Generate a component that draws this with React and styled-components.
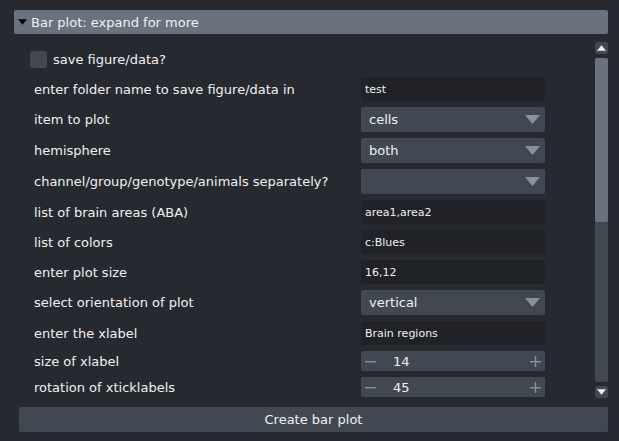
import { styled, createGlobalStyle } from "styled-components"

const GlobalStyle = createGlobalStyle`
    html, body {
        margin: 0;
        padding: 0;
        background: #262930;
    }
    body {
        font-family: "DejaVu Sans", "Liberation Sans", sans-serif;
        color: #f0f1f2;
    }
`

const Page = styled.div`
    width: 619px;
    height: 441px;
    box-sizing: border-box;
    padding: 10px 11px 0 14px;
    display: flex;
    flex-direction: column;
`

const Header = styled.div`
    height: 24px;
    background: #6a737d;
    border-radius: 2px;
    display: flex;
    align-items: center;
    padding-left: 4px;
    font-size: 13px;
    gap: 4px;
`

const Body = styled.div`
    display: flex;
    height: 373px;
`

const Content = styled.div`
    flex: 1;
    display: flex;
    flex-direction: column;
    gap: 6px;
    padding: 13px 0 0 20px;
    overflow: hidden;
`

const Row = styled.div`
    display: grid;
    grid-template-columns: 327px 184px;
    align-items: center;
    min-height: ${p => p.$h || 24}px;
`

const Label = styled.span`
    font-size: 13px;
    white-space: nowrap;
`

const CheckRow = styled.label`
    display: flex;
    align-items: center;
    gap: 6px;
    height: 24px;
    margin-left: -4px;
    font-size: 13px;
`

const Box = styled.span`
    width: 17px;
    height: 17px;
    border-radius: 3px;
    background: #414851;
`

const TextInput = styled.div`
    height: 24px;
    box-sizing: border-box;
    background: #202227;
    border-radius: 2px;
    display: flex;
    align-items: center;
    padding-left: 4px;
    font-size: 11px;
`

const Combo = styled.div`
    height: 25px;
    box-sizing: border-box;
    background: #414851;
    border-radius: 2px;
    display: flex;
    align-items: center;
    justify-content: space-between;
    padding: 0 5px 0 8px;
    font-size: 13px;
`

const Spin = styled.div`
    height: 20px;
    box-sizing: border-box;
    background: #414851;
    border-radius: 2px;
    display: flex;
    align-items: center;
    padding: 0 4px 0 4px;
    font-size: 13px;
`

const SpinValue = styled.span`
    flex: 1;
    padding-left: 17px;
`

const Scrollbar = styled.div`
    width: 13px;
    margin: 8px 0 0 49px;
    display: flex;
    flex-direction: column;
    gap: 4px;
    height: 356px;
`

const ScrollBtn = styled.div`
    height: 12px;
    background: #414851;
    border-radius: 2px;
    display: flex;
    align-items: center;
    justify-content: center;
`

const Track = styled.div`
    flex: 1;
    background: #414851;
    border-radius: 2px;
    display: flex;
    flex-direction: column;
`

const Handle = styled.div`
    height: 164px;
    background: #6a737d;
    border-radius: 2px;
`

const Button = styled.div`
    margin: 0 0 0 5px;
    height: 25px;
    background: #414851;
    border-radius: 2px;
    display: flex;
    align-items: center;
    justify-content: center;
    font-size: 13px;
`

const Arrow = ({ up, color = "#f0f1f2", w = 9, h = 6 }) => (
    <svg width={w} height={h} viewBox="0 0 10 6">
        {up ? <polygon points="0,6 10,6 5,0" fill={color} /> : <polygon points="0,0 10,0 5,6" fill={color} />}
    </svg>
)

const PlusMinus = ({ plus }) => (
    <svg width="11" height="11" viewBox="0 0 11 11">
        <rect x="0" y="5" width="11" height="1.4" fill="#8a919a" />
        {plus && <rect x="4.8" y="0" width="1.4" height="11" fill="#8a919a" />}
    </svg>
)

const rows = [
    { label: "enter folder name to save figure/data in", kind: "text", value: "test" },
    { label: "item to plot", kind: "combo", value: "cells" },
    { label: "hemisphere", kind: "combo", value: "both" },
    { label: "channel/group/genotype/animals separately?", kind: "combo", value: "" },
    { label: "list of brain areas (ABA)", kind: "text", value: "area1,area2" },
    { label: "list of colors", kind: "text", value: "c:Blues" },
    { label: "enter plot size", kind: "text", value: "16,12" },
    { label: "select orientation of plot", kind: "combo", value: "vertical" },
    { label: "enter the xlabel", kind: "text", value: "Brain regions" },
    { label: "size of xlabel", kind: "spin", value: "14" },
    { label: "rotation of xticklabels", kind: "spin", value: "45" },
]

function Widget({ kind, value }) {
    if (kind === "text") return <TextInput>{value}</TextInput>
    if (kind === "combo") return (
        <Combo>
            <span>{value}</span>
            <Arrow color="#8a919a" w={15} h={9} />
        </Combo>
    )
    return (
        <Spin>
            <PlusMinus />
            <SpinValue>{value}</SpinValue>
            <PlusMinus plus />
        </Spin>
    )
}

export default function App() {
    return (
        <>
            <GlobalStyle />
            <Page>
                <Header>
                    <Arrow w={9} h={8} color="#000" />
                    <span>Bar plot: expand for more</span>
                </Header>
                <Body>
                    <Content>
                        <CheckRow>
                            <Box />
                            <span>save figure/data?</span>
                        </CheckRow>
                        {rows.map(r => (
                            <Row key={r.label} $h={r.kind === "spin" ? 20 : 24}>
                                <Label>{r.label}</Label>
                                <Widget kind={r.kind} value={r.value} />
                            </Row>
                        ))}
                    </Content>
                    <Scrollbar>
                        <ScrollBtn><Arrow up w={9} h={6} /></ScrollBtn>
                        <Track><Handle /></Track>
                        <ScrollBtn><Arrow w={9} h={6} /></ScrollBtn>
                    </Scrollbar>
                </Body>
                <Button>Create bar plot</Button>
            </Page>
        </>
    )
}
